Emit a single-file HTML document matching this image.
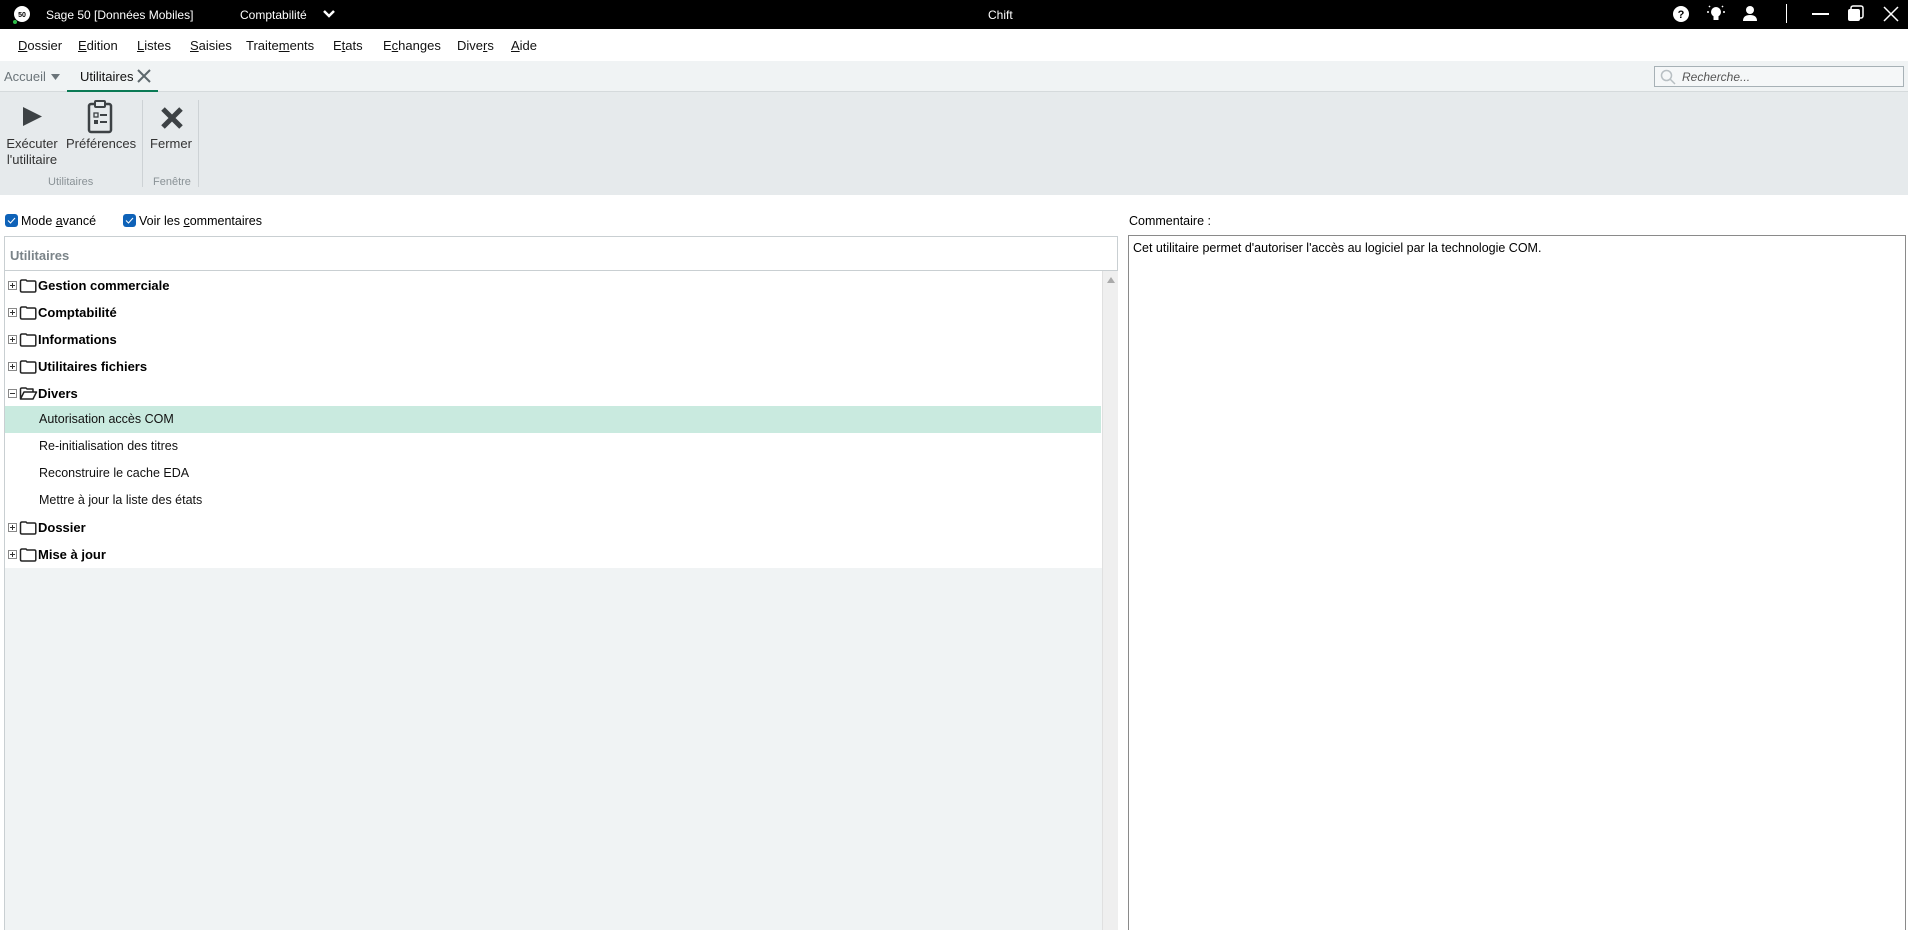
<!DOCTYPE html>
<html style="width:1908px;height:930px;overflow:hidden"><head><meta charset="utf-8">
<style>
*{margin:0;padding:0;box-sizing:border-box}
body{width:1908px;height:930px;overflow:hidden;background:#fff;font-family:"Liberation Sans",Arial,sans-serif;font-size:13px;color:#000;position:relative}
.abs{position:absolute}
#title{left:0;top:0;width:1908px;height:29px;background:#000;color:#fff}
#title span{position:absolute;top:8px;font-size:12px}
#menu{top:29px;left:0;width:1908px;height:32px;background:#fff}
#menu span{position:absolute;top:9px;font-size:13px;color:#111}
#tabs{top:61px;left:0;width:1908px;height:31px;background:#f0f3f4;border-bottom:1px solid #d5dadc}
#ribbon{top:92px;left:0;width:1908px;height:103px;background:#e6eaec}
.rl{position:absolute;font-size:13px;color:#333;text-align:center}
.gl{position:absolute;font-size:11px;color:#8a9296}
.row{position:absolute;left:5px;width:1096px;height:27px}
.row b{position:absolute;left:33px;top:6px;font-size:13px}
.row .t{position:absolute;left:34px;top:6px;font-size:12.5px;color:#111}
.pl{position:absolute;left:3px;top:9px;width:9px;height:9px;border:1px solid #888;background:#fff}
.pl:before{content:"";position:absolute;left:1px;top:3px;width:5px;height:1px;background:#333}
.pl.p:after{content:"";position:absolute;left:3px;top:1px;width:1px;height:5px;background:#333}
</style></head><body>
<div id="title" class="abs">
<svg class="abs" style="left:11px;top:4px" width="22" height="22"><circle cx="11" cy="10" r="8" fill="#fff"/><text x="11" y="13" font-size="7" font-weight="bold" text-anchor="middle" fill="#000" font-family="Liberation Sans">50</text><circle cx="4" cy="18" r="2" fill="#2fbf4a"/></svg>
<span style="left:46px">Sage 50 [Données Mobiles]</span>
<span style="left:240px">Comptabilité</span>
<svg class="abs" style="left:322px;top:8px" width="14" height="12"><path d="M2 3 L7 8 L12 3" stroke="#fff" stroke-width="2.5" fill="none"/></svg>
<span style="left:988px">Chift</span>
<svg class="abs" style="left:1672px;top:5px" width="18" height="18"><circle cx="9" cy="9" r="8" fill="#fff"/><text x="9" y="13" font-size="11" font-weight="bold" text-anchor="middle" fill="#000" font-family="Liberation Sans">?</text></svg>
<svg class="abs" style="left:1706px;top:4px" width="20" height="20"><circle cx="10" cy="8" r="5" fill="#fff"/><rect x="7.5" y="12" width="5" height="4" fill="#fff"/><path d="M3 8H1M19 8h-2M4 3 3 2M16 3l1-1" stroke="#fff" stroke-width="1.5"/></svg>
<svg class="abs" style="left:1741px;top:4px" width="18" height="20"><circle cx="9" cy="6" r="4" fill="#fff"/><path d="M2 17 Q2 11 9 11 Q16 11 16 17Z" fill="#fff"/></svg>
<div class="abs" style="left:1786px;top:4px;width:1px;height:19px;background:#fff"></div>
<div class="abs" style="left:1812px;top:13px;width:17px;height:2px;background:#fff"></div>
<svg class="abs" style="left:1847px;top:5px" width="18" height="18"><rect x="4" y="1" width="12" height="12" rx="2" fill="none" stroke="#fff" stroke-width="1.5"/><rect x="1" y="4" width="12" height="12" rx="2" fill="#fff"/></svg>
<svg class="abs" style="left:1882px;top:5px" width="18" height="18"><path d="M2 2L16 16M16 2L2 16" stroke="#fff" stroke-width="1.5"/></svg>
</div>
<div id="menu" class="abs">
<span style="left:18px"><u>D</u>ossier</span><span style="left:78px"><u>E</u>dition</span><span style="left:137px"><u>L</u>istes</span><span style="left:190px"><u>S</u>aisies</span><span style="left:246px">Traite<u>m</u>ents</span><span style="left:333px">E<u>t</u>ats</span><span style="left:383px">E<u>c</u>hanges</span><span style="left:457px">Dive<u>r</u>s</span><span style="left:511px"><u>A</u>ide</span>
</div>
<div id="tabs" class="abs">
<span class="abs" style="left:4px;top:8px;color:#6b7479">Accueil</span>
<svg class="abs" style="left:51px;top:12px" width="10" height="8"><path d="M0 1H9L4.5 7Z" fill="#6b7479"/></svg>
<span class="abs" style="left:80px;top:8px;color:#111">Utilitaires</span>
<svg class="abs" style="left:137px;top:8px" width="14" height="14"><path d="M1 1L13 13M13 1L1 13" stroke="#5d676c" stroke-width="2"/></svg>
<div class="abs" style="left:67px;top:29px;width:91px;height:3px;background:#0a7a55"></div>
<div class="abs" style="left:1654px;top:5px;width:250px;height:21px;border:1px solid #a7b1b6;background:#f5f7f8">
<svg class="abs" style="left:5px;top:2px" width="16" height="16"><circle cx="6.5" cy="6.5" r="5" stroke="#b8bfc3" stroke-width="1.5" fill="none"/><path d="M10 10L15 15" stroke="#b8bfc3" stroke-width="1.5"/></svg>
<span class="abs" style="left:27px;top:3px;font-style:italic;color:#555;font-size:12px">Recherche...</span>
</div>
</div>
<div id="ribbon" class="abs">
<svg class="abs" style="left:22px;top:14px" width="22" height="22"><path d="M1 1L20 10.5L1 20Z" fill="#3d4245"/></svg>
<svg class="abs" style="left:87px;top:8px" width="26" height="34"><rect x="2" y="4" width="22" height="28" rx="2" fill="none" stroke="#3d4245" stroke-width="2.5"/><rect x="8" y="1" width="10" height="6" rx="1" fill="#e6eaec" stroke="#3d4245" stroke-width="2"/><rect x="7" y="13" width="4" height="4" fill="none" stroke="#3d4245" stroke-width="1.3"/><rect x="7" y="20" width="4" height="4" fill="#3d4245"/><path d="M13 15h7M13 22h7" stroke="#3d4245" stroke-width="2"/></svg>
<svg class="abs" style="left:160px;top:14px" width="24" height="24"><path d="M3 3L21 21M21 3L3 21" stroke="#3d4245" stroke-width="5"/></svg>
<div class="rl" style="left:6px;top:44px;width:52px;line-height:16px">Exécuter<br>l'utilitaire</div>
<div class="rl" style="left:66px;top:44px;width:70px">Préférences</div>
<div class="rl" style="left:148px;top:44px;width:46px">Fermer</div>
<div class="gl" style="left:48px;top:84px">Utilitaires</div>
<div class="gl" style="left:153px;top:84px">Fenêtre</div>
<div class="abs" style="left:142px;top:8px;width:1px;height:87px;background:#cdd2d5"></div>
<div class="abs" style="left:198px;top:8px;width:1px;height:87px;background:#cdd2d5"></div>
</div>
<div class="abs" style="left:5px;top:214px;width:13px;height:13px;border-radius:3px;background:#0e62b8"><svg width="13" height="13"><path d="M3 6.5L5.5 9L10 4" stroke="#fff" stroke-width="1" fill="none"/></svg></div>
<span class="abs" style="left:21px;top:214px;font-size:12.5px">Mode <u>a</u>vancé</span>
<div class="abs" style="left:123px;top:214px;width:13px;height:13px;border-radius:3px;background:#0e62b8"><svg width="13" height="13"><path d="M3 6.5L5.5 9L10 4" stroke="#fff" stroke-width="1" fill="none"/></svg></div>
<span class="abs" style="left:139px;top:214px;font-size:12.5px">Voir les <u>c</u>ommentaires</span>
<div class="abs" style="left:4px;top:236px;width:1114px;height:694px;border:1px solid #c9cfd2;border-bottom:none;background:#f0f3f4">
<div class="abs" style="left:0;top:0;width:1112px;height:34px;background:#fff;border-bottom:1px solid #c9cfd2"><span class="abs" style="left:5px;top:11px;font-weight:bold;color:#7a8388;font-size:13px">Utilitaires</span></div>
<div class="abs" style="left:0;top:34px;width:1097px;height:297px;background:#fff"></div>
<div class="abs" style="left:1097px;top:34px;width:16px;height:660px;background:#efefef;border-left:1px solid #e0e0e0"><svg class="abs" style="left:4px;top:6px" width="9" height="7"><path d="M0 6H8L4 0Z" fill="#aaa"/></svg></div>
</div>
<svg width="0" height="0" style="position:absolute"><defs><symbol id="fd" viewBox="0 0 18 15"><path d="M1.5 3.5 Q1.5 2 3 2 H7 L8 3 H15.5 Q16.8 3 16.8 4.5 V12.5 Q16.8 14 15.5 14 H3 Q1.5 14 1.5 12.5 Z" fill="none" stroke="#222" stroke-width="1.5"/></symbol></defs></svg>
<div class="row" style="top:272px"><i class="pl p"></i><svg class="abs" style="left:14px;top:6px" width="18" height="15"><use href="#fd"/></svg><b>Gestion commerciale</b></div>
<div class="row" style="top:299px"><i class="pl p"></i><svg class="abs" style="left:14px;top:6px" width="18" height="15"><use href="#fd"/></svg><b>Comptabilité</b></div>
<div class="row" style="top:326px"><i class="pl p"></i><svg class="abs" style="left:14px;top:6px" width="18" height="15"><use href="#fd"/></svg><b>Informations</b></div>
<div class="row" style="top:353px"><i class="pl p"></i><svg class="abs" style="left:14px;top:6px" width="18" height="15"><use href="#fd"/></svg><b>Utilitaires fichiers</b></div>
<div class="row" style="top:380px"><i class="pl"></i><svg class="abs" style="left:14px;top:6px" width="19" height="15"><path d="M1.5 13 V3 Q1.5 2 3 2 H7 L8 3 H14 V6 M1.5 13 L5 6 H17.5 L14 13 Z" stroke="#222" stroke-width="1.5" fill="none" stroke-linejoin="round"/></svg><b>Divers</b></div>
<div class="row" style="top:406px;background:#c9eadf"><span class="t">Autorisation accès COM</span></div>
<div class="row" style="top:433px"><span class="t">Re-initialisation des titres</span></div>
<div class="row" style="top:460px"><span class="t">Reconstruire le cache EDA</span></div>
<div class="row" style="top:487px"><span class="t">Mettre à jour la liste des états</span></div>
<div class="row" style="top:514px"><i class="pl p"></i><svg class="abs" style="left:14px;top:6px" width="18" height="15"><use href="#fd"/></svg><b>Dossier</b></div>
<div class="row" style="top:541px"><i class="pl p"></i><svg class="abs" style="left:14px;top:6px" width="18" height="15"><use href="#fd"/></svg><b>Mise à jour</b></div>
<span class="abs" style="left:1129px;top:214px;font-size:12.5px">Commentaire :</span>
<div class="abs" style="left:1128px;top:235px;width:778px;height:695px;border:1px solid #8a8a8a;border-bottom:none;background:#fff"><span class="abs" style="left:4px;top:5px;font-size:12.5px">Cet utilitaire permet d'autoriser l'accès au logiciel par la technologie COM.</span></div>
</body></html>
